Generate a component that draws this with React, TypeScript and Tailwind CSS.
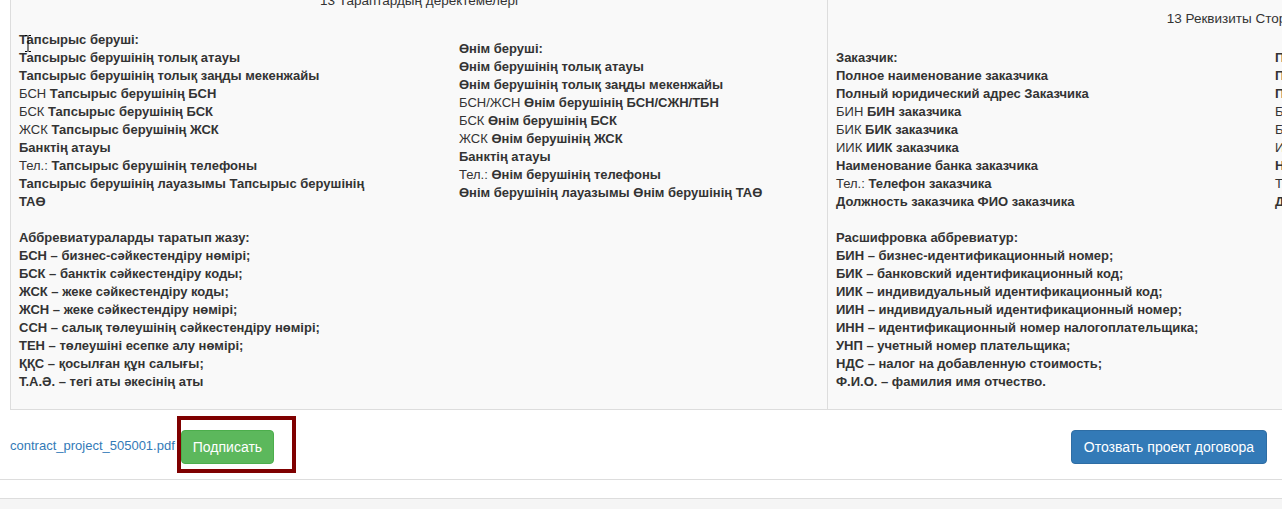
import React from 'react';

type Row = { pre?: string; text?: string };

const customer: Row[] = [
  { text: 'Тапсырыс беруші:' },
  { text: 'Тапсырыс берушінің толық атауы' },
  { text: 'Тапсырыс берушінің толық заңды мекенжайы' },
  { pre: 'БСН', text: 'Тапсырыс берушінің БСН' },
  { pre: 'БСК', text: 'Тапсырыс берушінің БСК' },
  { pre: 'ЖСК', text: 'Тапсырыс берушінің ЖСК' },
  { text: 'Банктің атауы' },
  { pre: 'Тел.:', text: 'Тапсырыс берушінің телефоны' },
  { text: 'Тапсырыс берушінің лауазымы Тапсырыс берушінің ТАӨ' },
];

const supplier: Row[] = [
  { text: 'Өнім беруші:' },
  { text: 'Өнім берушінің толық атауы' },
  { text: 'Өнім берушінің толық заңды мекенжайы' },
  { pre: 'БСН/ЖСН', text: 'Өнім берушінің БСН/СЖН/ТБН' },
  { pre: 'БСК', text: 'Өнім берушінің БСК' },
  { pre: 'ЖСК', text: 'Өнім берушінің ЖСК' },
  { text: 'Банктің атауы' },
  { pre: 'Тел.:', text: 'Өнім берушінің телефоны' },
  { text: 'Өнім берушінің лауазымы Өнім берушінің ТАӨ' },
];

const abbrKz = [
  'Аббревиатураларды таратып жазу:',
  'БСН – бизнес-сәйкестендіру нөмірі;',
  'БСК – банктік сәйкестендіру коды;',
  'ЖСК – жеке сәйкестендіру коды;',
  'ЖСН – жеке сәйкестендіру нөмірі;',
  'ССН – салық төлеушінің сәйкестендіру нөмірі;',
  'ТЕН – төлеушіні есепке алу нөмірі;',
  'ҚҚС – қосылған құн салығы;',
  'Т.А.Ә. – тегі аты әкесінің аты',
];

const zakazchik: Row[] = [
  { text: 'Заказчик:' },
  { text: 'Полное наименование заказчика' },
  { text: 'Полный юридический адрес Заказчика' },
  { pre: 'БИН', text: 'БИН заказчика' },
  { pre: 'БИК', text: 'БИК заказчика' },
  { pre: 'ИИК', text: 'ИИК заказчика' },
  { text: 'Наименование банка заказчика' },
  { pre: 'Тел.:', text: 'Телефон заказчика' },
  { text: 'Должность заказчика ФИО заказчика' },
];

const postavshik: Row[] = [
  { text: 'Поставщик:' },
  { text: 'Полное наименование поставщика' },
  { text: 'Полный юридический адрес поставщика' },
  { pre: 'БИН/ИИН', text: 'БИН/ИИН/УНП поставщика' },
  { pre: 'БИК', text: 'БИК поставщика' },
  { pre: 'ИИК', text: 'ИИК поставщика' },
  { text: 'Наименование банка поставщика' },
  { pre: 'Тел.:', text: 'Телефон поставщика' },
  { text: 'Должность поставщика ФИО поставщика' },
];

const abbrRu = [
  'Расшифровка аббревиатур:',
  'БИН – бизнес-идентификационный номер;',
  'БИК – банковский идентификационный код;',
  'ИИК – индивидуальный идентификационный код;',
  'ИИН – индивидуальный идентификационный номер;',
  'ИНН – идентификационный номер налогоплательщика;',
  'УНП – учетный номер плательщика;',
  'НДС – налог на добавленную стоимость;',
  'Ф.И.О. – фамилия имя отчество.',
];

const Block = ({ rows }: { rows: Row[] }) => (
  <div>
    {rows.map((r, i) => (
      <div key={i}>
        {r.pre && <span className="font-normal">{r.pre} </span>}
        <span className="font-bold">{r.text}</span>
      </div>
    ))}
  </div>
);

const Plain = ({ lines }: { lines: string[] }) => (
  <div className="font-bold">
    {lines.map((l, i) => (
      <div key={i}>{l}</div>
    ))}
  </div>
);

export default function App() {
  return (
    <div className="relative w-[1282px] h-[509px] overflow-hidden bg-white font-['Liberation_Sans',Arial,sans-serif] text-[13px] leading-[18px] text-[#333]">
      {/* requisites panel */}
      <div className="ml-[10px] flex h-[410px] overflow-hidden border-b border-l border-[#ddd] bg-[#f9f9f9]">
        <div className="flex w-[816px] shrink-0 flex-col justify-end px-[8px] pb-[18px]">
          <div className="text-center text-[13.5px]">13 Тараптардың деректемелері</div>
          <div className="mt-[21px] grid grid-cols-[440px_1fr] items-center">
            <div className="max-w-[365px]">
              <Block rows={customer} />
            </div>
            <Block rows={supplier} />
          </div>
          <div className="mt-[18px]">
            <Plain lines={abbrKz} />
          </div>
        </div>
        <div className="flex w-[813px] shrink-0 flex-col justify-end border-l border-[#ddd] px-[8px] pb-[18px]">
          <div className="text-center text-[13.5px]">13 Реквизиты Сторон</div>
          <div className="mt-[21px] grid grid-cols-[439px_1fr] items-center">
            <Block rows={zakazchik} />
            <div className="whitespace-nowrap">
              <Block rows={postavshik} />
            </div>
          </div>
          <div className="mt-[18px]">
            <Plain lines={abbrRu} />
          </div>
        </div>
      </div>

      {/* actions */}
      <div className="flex h-[70px] items-center justify-between border-b border-[#ddd] pl-[10px] pr-[15px] pt-[5px]">
        <div className="flex items-center">
          <a className="mb-[3px] text-[#337ab7]">contract_project_505001.pdf</a>
          <span className="relative ml-[6px]">
            <button className="h-[34px] rounded-[4px] border border-[#4cae4c] bg-[#5cb85c] px-[11px] text-[14px] leading-[20px] text-white">
              Подписать
            </button>
            <span className="pointer-events-none absolute -left-[4px] -top-[14px] -right-[22px] -bottom-[9px] border-[4px] border-[#7f0000]" />
          </span>
        </div>
        <button className="h-[34px] rounded-[4px] border border-[#2e6da4] bg-[#337ab7] px-[12px] text-[14px] leading-[20px] text-white">
          Отозвать проект договора
        </button>
      </div>

      <div className="h-[18px]" />
      <div className="h-[12px] border-t border-[#ddd] bg-[#f5f5f5]" />

      {/* text cursor */}
      <svg className="absolute left-[24px] top-[35px]" width="8" height="17" viewBox="0 0 8 17">
        <path d="M1 0.5h2.5M4.5 0.5H7M4 1v15M1 16.5h2.5M4.5 16.5H7" stroke="#000" strokeWidth="1" fill="none" />
      </svg>
    </div>
  );
}
